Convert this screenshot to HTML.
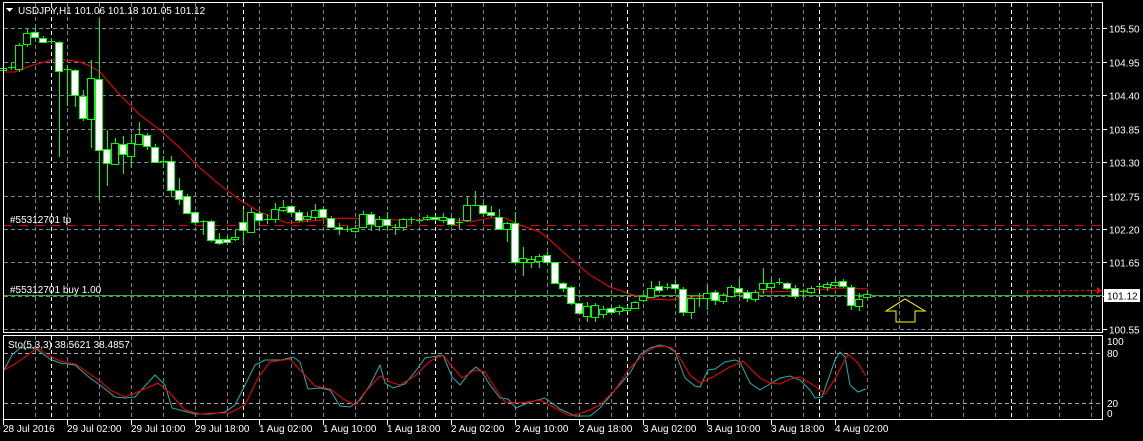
<!DOCTYPE html>
<html><head><meta charset="utf-8"><style>
html,body{margin:0;padding:0;background:#000;width:1143px;height:441px;overflow:hidden}
svg{display:block}
text{font-family:"Liberation Sans",sans-serif;font-size:10px;fill:#fff}
</style></head><body>
<svg id="s" width="1143" height="441" xmlns="http://www.w3.org/2000/svg" shape-rendering="crispEdges">
<rect width="1143" height="441" fill="#000"/>
<g id="grid"></g>
<line x1="3" y1="225.5" x2="1103" y2="225.5" stroke="#e00000" stroke-dasharray="9,7"/>
<line x1="3" y1="295.5" x2="1103" y2="295.5" stroke="#2db52d"/>
<g id="ma"></g>
<g id="candles"></g>
<line x1="1027" y1="290.5" x2="1097" y2="290.5" stroke="#ff0000" stroke-dasharray="3,3"/>
<polygon points="1097,287 1102,290.5 1097,294" fill="#ff0000"/>
<polygon points="886,311 905,299 925,311 915,311 915,322 896,322 896,311" fill="none" stroke="#ffff00" shape-rendering="auto"/>
<rect x="3.5" y="2.5" width="1099" height="330" fill="none" stroke="#fff"/>
<rect x="3.5" y="335.5" width="1099" height="84" fill="none" stroke="#fff"/>
<g id="axis"></g>
<g id="sto"></g>
<polygon points="6,8 13,8 9.5,12" fill="#fff"/>
<text x="18" y="14">USDJPY,H1  101.06 101.18 101.05 101.12</text>
<text x="10" y="223">#55312701 tp</text>
<text x="10" y="293">#55312701 buy 1.00</text>
<text x="8" y="348">Sto(5,3,3) 38.5621 38.4857</text>
<rect x="1104" y="289" width="36" height="13" fill="#fff"/>
<text x="1107" y="299.5" style="fill:#000">101.12</text>
</svg>
<script>
const NS="http://www.w3.org/2000/svg";
function el(p,t,a){const e=document.createElementNS(NS,t);for(const k in a)e.setAttribute(k,a[k]);document.getElementById(p).appendChild(e);return e;}
for(let x=35;x<1103;x+=32){el('grid','line',{x1:x+.5,y1:3,x2:x+.5,y2:332,stroke:'#7a8494','stroke-dasharray':'4,3'});el('grid','line',{x1:x+.5,y1:336,x2:x+.5,y2:419,stroke:'#7a8494','stroke-dasharray':'4,3'});}
[51,243,435,627,819,1011].forEach(x=>{el('grid','line',{x1:x+.5,y1:3,x2:x+.5,y2:332,stroke:'#fff','stroke-dasharray':'4,3'});el('grid','line',{x1:x+.5,y1:336,x2:x+.5,y2:419,stroke:'#fff','stroke-dasharray':'4,3'});});
const prices=["105.50","104.95","104.40","103.85","103.30","102.75","102.20","101.65","101.10","100.55"];
prices.forEach((p,i)=>{const y=Math.round(28.3+33.44*i)+.5;el('grid','line',{x1:4,y1:y,x2:1103,y2:y,stroke:'#7a8494','stroke-dasharray':'4,3'});el('axis','line',{x1:1103,y1:y,x2:1107,y2:y,stroke:'#fff'});if(i!=8){const t=el('axis','text',{x:1109,y:y+4});t.textContent=p;}});
[[353.5,'80'],[403.5,'20']].forEach(a=>{el('grid','line',{x1:4,y1:a[0],x2:1103,y2:a[0],stroke:'#aaa','stroke-dasharray':'4,3'});});
[[345,'100'],[357,'80'],[407,'20'],[417,'0']].forEach(a=>{const t=el('axis','text',{x:1107,y:a[0]});t.textContent=a[1];});
const tl=["28 Jul 2016","29 Jul 02:00","29 Jul 10:00","29 Jul 18:00","1 Aug 02:00","1 Aug 10:00","1 Aug 18:00","2 Aug 02:00","2 Aug 10:00","2 Aug 18:00","3 Aug 02:00","3 Aug 10:00","3 Aug 18:00","4 Aug 02:00"];
tl.forEach((s,i)=>{const x=3+64*i;el('axis','line',{x1:x+.5,y1:420,x2:x+.5,y2:425,stroke:'#fff'});const t=el('axis','text',{x:x,y:432});t.textContent=s;});
const C=[[70,68,66,72],[67,67,63,70],[69,45,43,72],[44,33,28,47],[32,37,28,38],[38,42,36,43],[41,41,38,44],[42,71,41,157],[69,69,65,106],[70,95,69,107],[96,118,90,121],[119,78,60,148],[79,150,19,200],[149,163,130,186],[164,143,138,165],[144,154,136,174],[156,143,134,168],[144,134,122,144],[135,146,133,150],[147,162,144,163],[161,161,156,168],[161,190,156,197],[190,199,178,205],[196,213,194,214],[212,222,211,225],[221,221,220,235],[221,240,220,242],[239,243,233,245],[239,242,236,245],[239,237,230,241],[222,230,209,244],[232,212,208,233],[213,220,211,226],[219,219,214,224],[219,209,203,223],[210,207,200,212],[206,212,205,215],[212,220,210,222],[219,216,212,222],[217,210,204,220],[209,217,206,219],[218,227,216,228],[227,229,223,235],[229,229,226,232],[231,228,225,233],[227,214,211,227],[214,224,212,231],[226,219,216,231],[219,225,212,231],[227,227,224,235],[227,219,218,231],[219,219,217,224],[220,220,218,223],[219,217,215,221],[217,219,215,221],[220,217,213,223],[218,224,217,226],[222,222,218,229],[220,205,196,222],[205,205,191,205],[205,213,203,217],[212,215,206,217],[217,229,209,229],[229,223,222,242],[223,262,212,264],[262,258,247,276],[262,259,256,268],[261,256,254,268],[255,262,252,264],[262,283,262,284],[283,288,282,292],[287,303,286,305],[303,313,303,315],[316,306,302,322],[317,305,303,322],[314,309,306,318],[308,312,306,313],[311,307,305,315],[310,308,306,312],[308,302,301,309],[300,296,294,302],[297,288,281,298],[286,290,281,293],[287,287,283,290],[284,288,280,291],[289,312,287,316],[312,298,296,319],[298,298,293,307],[298,293,285,310],[292,300,290,305],[301,295,293,304],[296,287,285,298],[288,292,279,296],[292,298,290,302],[299,292,290,302],[289,283,268,294],[287,283,279,290],[282,282,278,285],[283,288,282,290],[288,296,285,299],[291,291,289,296],[292,288,286,294],[286,286,284,290],[287,284,282,291],[285,282,279,288],[281,286,279,288],[287,305,285,310],[306,299,293,311],[297,294,290,299]];
C.forEach((c,k)=>{const x=Math.round(3.3+8*k);const [o,cl,h,l]=c;
el('candles','line',{x1:x+.5,y1:h,x2:x+.5,y2:l,stroke:'#00ff00'});
const top=Math.min(o,cl),bot=Math.max(o,cl);
if(bot-top<1){el('candles','line',{x1:x-3,y1:top+.5,x2:x+4,y2:top+.5,stroke:'#00ff00'});}
else el('candles','rect',{x:x-3.5,y:top+.5,width:7,height:bot-top,fill:cl>o?'#fff':'#000',stroke:'#00ff00'});});
const M=[[4,72],[15,72],[30,66],[51,60],[67,60],[80,62],[90,66],[100,72],[120,95],[140,115],[160,130],[180,148],[200,168],[220,185],[240,200],[260,212],[287,223],[300,222],[343,218],[400,220],[450,219],[470,222],[490,218],[505,218],[520,225],[540,232],[550,240],[570,258],[590,275],[610,287],[630,294],[650,299],[670,300],[690,297],[720,295],[760,292],[800,291],[840,288],[868,289]];
el('ma','polyline',{points:M.map(p=>p.join(',')).join(' '),fill:'none',stroke:'#ff0000','shape-rendering':'auto'});
const K=[[4,370],[12,355],[20,348],[35,348],[50,359],[60,363],[75,365],[83,372],[90,378],[100,385],[115,397],[125,398],[135,397],[155,375],[165,385],[172,408],[195,414],[210,414],[225,412],[235,405],[245,385],[255,365],[265,360],[282,360],[293,357],[300,362],[308,389],[320,388],[330,390],[340,406],[350,407],[360,400],[370,385],[380,365],[385,383],[393,388],[405,384],[415,372],[425,358],[443,355],[452,377],[460,385],[470,372],[476,367],[482,372],[490,385],[500,398],[508,399],[516,408],[530,402],[545,398],[560,409],[575,416],[590,416],[600,408],[615,390],[630,373],[640,355],[650,348],[660,345],[668,347],[675,352],[685,378],[695,386],[700,387],[708,370],[715,369],[725,362],[735,360],[740,362],[750,383],[760,390],[770,384],[780,378],[790,376],[800,380],[810,390],[815,398],[822,397],[835,360],[840,352],[845,357],[850,385],[858,392],[866,389]];
const D=[[4,370],[15,364],[25,357],[37,348],[50,356],[60,361],[75,364],[90,374],[100,381],[110,390],[125,397],[140,391],[158,383],[170,393],[185,410],[200,414],[215,413],[230,413],[245,405],[258,378],[270,362],[290,359],[300,370],[315,386],[330,389],[345,400],[355,405],[365,392],[380,376],[390,382],[400,385],[415,376],[430,361],[443,355],[450,364],[462,378],[475,370],[485,372],[495,388],[505,402],[520,403],[540,400],[555,408],[570,416],[585,412],[600,405],[615,390],[630,368],[645,353],[655,347],[665,346],[672,348],[680,358],[690,375],[700,383],[713,377],[730,367],[743,361],[760,378],[770,383],[780,384],[790,379],[800,377],[815,386],[825,394],[835,379],[848,354],[858,363],[866,376]];
el('sto','polyline',{points:K.map(p=>p.join(',')).join(' '),fill:'none',stroke:'#20b2aa','shape-rendering':'auto'});
el('sto','polyline',{points:D.map(p=>p.join(',')).join(' '),fill:'none',stroke:'#ff0000','shape-rendering':'auto'});
</script>
</body></html>
